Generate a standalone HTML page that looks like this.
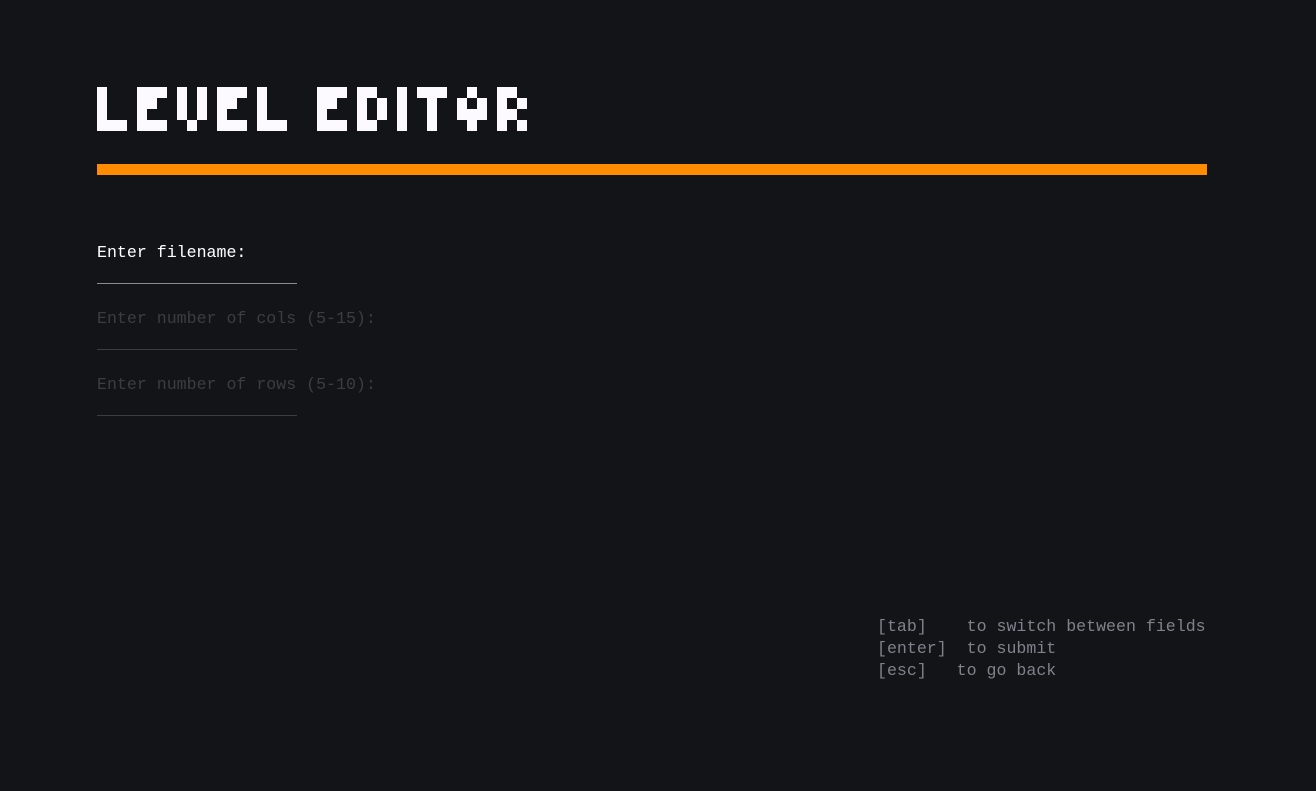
<!DOCTYPE html>
<html><head><style>
body{margin:0;background:#131418;width:1316px;height:791px;overflow:hidden;position:relative;font-family:"Liberation Mono",monospace;font-size:16.6px}
.bar{position:absolute;left:97px;top:164px;width:1110px;height:11px;background:#ff8c00}
.t{position:absolute;left:97px;white-space:pre;line-height:20px}
.u{position:absolute;left:97px;width:200px;height:1px}
.f{position:absolute;left:877px;white-space:pre;color:#7e828a;line-height:22px;top:616px}
</style></head><body>
<div class="bar"></div>
<div class="t" style="top:243px;color:#fff">Enter filename:</div>
<div class="u" style="top:283px;background:#8a8c92"></div>
<div class="t" style="top:309px;color:#3b3d42">Enter number of cols (5-15):</div>
<div class="u" style="top:349px;background:#3b3d42"></div>
<div class="t" style="top:375px;color:#3b3d42">Enter number of rows (5-10):</div>
<div class="u" style="top:415px;background:#3b3d42"></div>
<div class="f">[tab]    to switch between fields
[enter]  to submit
[esc]   to go back</div>
<svg width="1316" height="791" style="position:absolute;left:0;top:0" shape-rendering="crispEdges">
<g fill="#fdfaff" id="g"></g>
</svg>
<script>
var L={L:["X..","X..","X..","XXX"],E:["XXX","XX.","X..","XXX"],V:["X.X","X.X","X.X",".X."],
D:["XX.","X.X","X.X","XX."],I:["X","X","X","X"],T:["XXX",".X.",".X.",".X."],O:[".X.","X.X","XXX",".X."],R:["XX.","X.X","XX.","X.X"]};
var seq=[["L",97],["E",137],["V",177],["E",217],["L",257],["E",317],["D",357],["I",397],["T",417],["O",457],["R",497]];
var ry=[87,98,109,120,131],s="";
seq.forEach(function(p){var g=L[p[0]];for(var r=0;r<4;r++)for(var c=0;c<g[r].length;c++)if(g[r][c]=="X")
s+='<rect x="'+(p[1]+c*10)+'" y="'+ry[r]+'" width="10" height="'+(ry[r+1]-ry[r])+'"/>';});
document.getElementById("g").innerHTML=s;
</script>
</body></html>
